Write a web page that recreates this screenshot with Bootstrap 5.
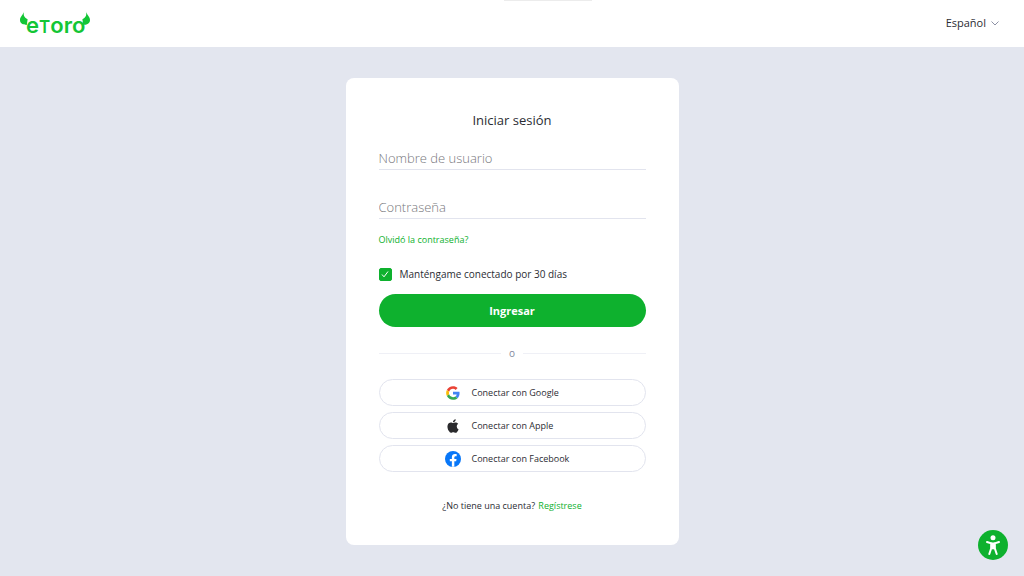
<!DOCTYPE html>
<html lang="es">
<head>
<meta charset="utf-8">
<meta name="viewport" content="width=device-width, initial-scale=1">
<title>eToro - Iniciar sesión</title>
<link href="https://cdn.jsdelivr.net/npm/bootstrap@5.3.0/dist/css/bootstrap.min.css" rel="stylesheet">
<script src="https://cdn.jsdelivr.net/npm/bootstrap@5.3.0/dist/js/bootstrap.bundle.min.js" defer></script>
<style>
  :root { --green: #0eb12e; --line: #e2e4ee; --ink: #2b2c33; }
  body { background: #e3e6ef; color: var(--ink); font-family: "Open Sans", sans-serif; font-size: 10px; line-height: 16px; }
  a { color: var(--green); text-decoration: none; }
  .topbar { height: 47px; padding: 0 24px 1px 20px; }
  .loading-strip { width: 88px; height: 1px; margin-left: -8px; background: #ececec; }
  .wordmark { font: 600 22px Inter, sans-serif; fill: #13c636; }
  .wordmark .cap { font-size: 17px; }
  .lang { color: var(--ink); font-size: 11px; line-height: 16px; }
  .login-card { max-width: 333px; margin-top: 31px; padding: 32px 33px 31px; border-radius: 8px; }
  .login-title { font-size: 13px; line-height: 20px; font-weight: 400; margin-bottom: 18px; }
  .line-input { border: 0; border-bottom: 1px solid var(--line); border-radius: 0; padding: 0 0 2px; height: 22px; font-size: 13px; line-height: 19px; font-weight: 300; }
  .line-input + .line-input { margin-top: 27px; }
  .line-input::placeholder { color: #77777c; opacity: 1; }
  .fine { font-size: 9px; line-height: 16px; }
  .forgot { margin: 13px 0 18px; }
  .form-check-input.keep { width: 13px; height: 13px; margin: 0; border-radius: 2px; }
  .keep:checked { background-color: var(--green); border-color: var(--green); background-size: 10px;
    background-image: url("data:image/svg+xml,%3csvg xmlns='http://www.w3.org/2000/svg' viewBox='0 0 10 10'%3e%3cpath fill='none' stroke='%23fff' d='M2 5.5 4 7.8 8 2.5'/%3e%3c/svg%3e"); }
  .btn-enter { height: 33px; margin-top: 12px; padding: 0; background: var(--green); color: #fff; font-size: 11px; line-height: 16px; font-weight: 700; }
  .btn-enter:hover { background: #0c9c29; color: #fff; }
  .or { margin: 18px 0; color: #84899e; }
  .rule { height: 1px; background: #eff0f6; }
  .socials { gap: 6px; }
  .btn-social { height: 27px; padding: 0 0 0 65px; gap: 11px; border: 1px solid var(--line); color: var(--ink); font-size: 9px; line-height: 16px; }
  .btn-social:hover { border-color: #b9bdcc; }
  .signup { margin: 26px 0 0; }
  .signup a { margin-left: 1px; }
  .access { width: 30px; height: 30px; margin: 16px; background: var(--green); }
</style>
</head>
<body class="min-vh-100">
<header class="topbar bg-white d-flex align-items-center justify-content-between position-relative">
  <div class="loading-strip position-absolute top-0 start-50"></div>
  <a href="#" aria-label="eToro">
    <svg class="d-block" width="70" height="32" viewBox="0 -4 70 32">
      <g fill="#13c636">
        <path d="M4.200 0C3 4 4 6.400 7.600 8.200L6.800 14C3 13.800 0 12.500 0 9 0 5.600 3.200 4 4.200 0Z"/>
        <path d="M65.800 0C67 4 66 6.400 62.400 8.200L63.200 14C67 13.800 70 12.500 70 9 70 5.600 66.800 4 65.800 0Z"/>
      </g>
      <text class="wordmark" x="6" y="22">e<tspan class="cap">T</tspan>oro</text>
    </svg>
  </a>
  <button type="button" class="lang btn border-0 p-0 d-flex align-items-center gap-1">
    Español
    <svg width="10" height="8" viewBox="0 0 10 8"><path d="M1.500 2.500 5 6l3.500-3.500" fill="none" stroke="#8e92a6"/></svg>
  </button>
</header>

<main class="px-2">
  <form class="login-card bg-white mx-auto d-flex flex-column">
    <h1 class="login-title text-center">Iniciar sesión</h1>
    <input class="line-input form-control shadow-none" type="text" placeholder="Nombre de usuario" aria-label="Nombre de usuario">
    <input class="line-input form-control shadow-none" type="password" placeholder="Contraseña" aria-label="Contraseña">
    <a href="#" class="fine forgot align-self-start">Olvidó la contraseña?</a>
    <div class="d-flex align-items-center gap-2">
      <input class="keep form-check-input" type="checkbox" id="keep" checked>
      <label for="keep">Manténgame conectado por 30 días</label>
    </div>
    <button type="submit" class="btn-enter btn rounded-pill border-0">Ingresar</button>
    <div class="or d-flex align-items-center gap-2">
      <span class="rule flex-fill"></span>o<span class="rule flex-fill"></span>
    </div>
    <div class="socials d-grid">
      <button type="button" class="btn-social btn rounded-pill d-flex align-items-center">
        <svg width="16" height="16" viewBox="-4 -4 56 56"><path fill="#ea4335" d="M24 9.500c3.540 0 6.710 1.220 9.210 3.600l6.850-6.850C35.900 2.380 30.470 0 24 0 14.620 0 6.510 5.380 2.560 13.220l7.980 6.190C12.430 13.720 17.740 9.500 24 9.500z"/><path fill="#4285f4" d="M46.980 24.550c0-1.570-.15-3.090-.38-4.550H24v9.020h12.940c-.58 2.960-2.260 5.480-4.780 7.180l7.730 6c4.510-4.180 7.090-10.360 7.090-17.650z"/><path fill="#fbbc05" d="M10.530 28.590A14.500 14.500 0 0 1 9.770 24c0-1.600.27-3.140.76-4.590l-7.980-6.190A23.900 23.900 0 0 0 0 24c0 3.880.92 7.540 2.560 10.780z"/><path fill="#34a853" d="M24 48c6.480 0 11.930-2.130 15.890-5.810l-7.730-6C30 37.650 27.240 38.490 24 38.490c-6.260 0-11.570-4.220-13.470-9.910l-7.980 6.190C6.510 42.620 14.620 48 24 48z"/></svg>
        Conectar con Google
      </button>
      <button type="button" class="btn-social btn rounded-pill d-flex align-items-center">
        <svg width="16" height="16" viewBox="-2 -2 28 28"><path fill="#2a2a2d" d="M12.152 6.896c-.948 0-2.415-1.078-3.960-1.040-2.040.027-3.910 1.183-4.961 3.014-2.117 3.675-.546 9.103 1.519 12.090 1.013 1.454 2.208 3.090 3.792 3.039 1.520-.065 2.090-.987 3.935-.987 1.831 0 2.350.987 3.960.948 1.637-.026 2.676-1.480 3.676-2.948 1.156-1.688 1.636-3.325 1.662-3.415-.039-.013-3.182-1.221-3.220-4.857-.026-3.040 2.480-4.494 2.597-4.559-1.429-2.090-3.623-2.324-4.390-2.376-2-.156-3.675 1.090-4.610 1.090zM15.530 3.830c.843-1.012 1.400-2.427 1.245-3.830-1.207.052-2.662.805-3.532 1.818-.78.896-1.454 2.338-1.273 3.714 1.338.104 2.715-.688 3.559-1.701z"/></svg>
        Conectar con Apple
      </button>
      <button type="button" class="btn-social btn rounded-pill d-flex align-items-center">
        <svg width="16" height="16" viewBox="0 0 24 24"><circle cx="12" cy="12" r="12" fill="#0877f8"/><path fill="#fff" d="M10.300 23.800V15.500H7.200V12h3.100V9.400c0-3.100 1.800-4.800 4.600-4.800 1.400 0 2.600.2 2.600.2v3h-1.500c-1.500 0-2 .9-2 1.900V12h3.300l-.5 3.500H14v8.300z"/></svg>
        Conectar con Facebook
      </button>
    </div>
    <p class="signup fine text-center">¿No tiene una cuenta? <a href="#">Regístrese</a></p>
  </form>
</main>

<button type="button" class="access btn p-0 border-0 rounded-circle position-fixed bottom-0 end-0 d-flex align-items-center justify-content-center" aria-label="Accesibilidad">
  <svg width="30" height="30" viewBox="0 0 30 30"><circle cx="15" cy="7.800" r="2.500" fill="#fff"/><path d="M9 12 13.300 13.400V18L11.300 24M21 12 16.700 13.400V18L18.700 24" fill="none" stroke="#fff" stroke-width="2" stroke-linecap="round" stroke-linejoin="round"/><path fill="#fff" d="M12.500 12.500h5v6l-2.500 1-2.500-1z"/></svg>
</button>
</body>
</html>
